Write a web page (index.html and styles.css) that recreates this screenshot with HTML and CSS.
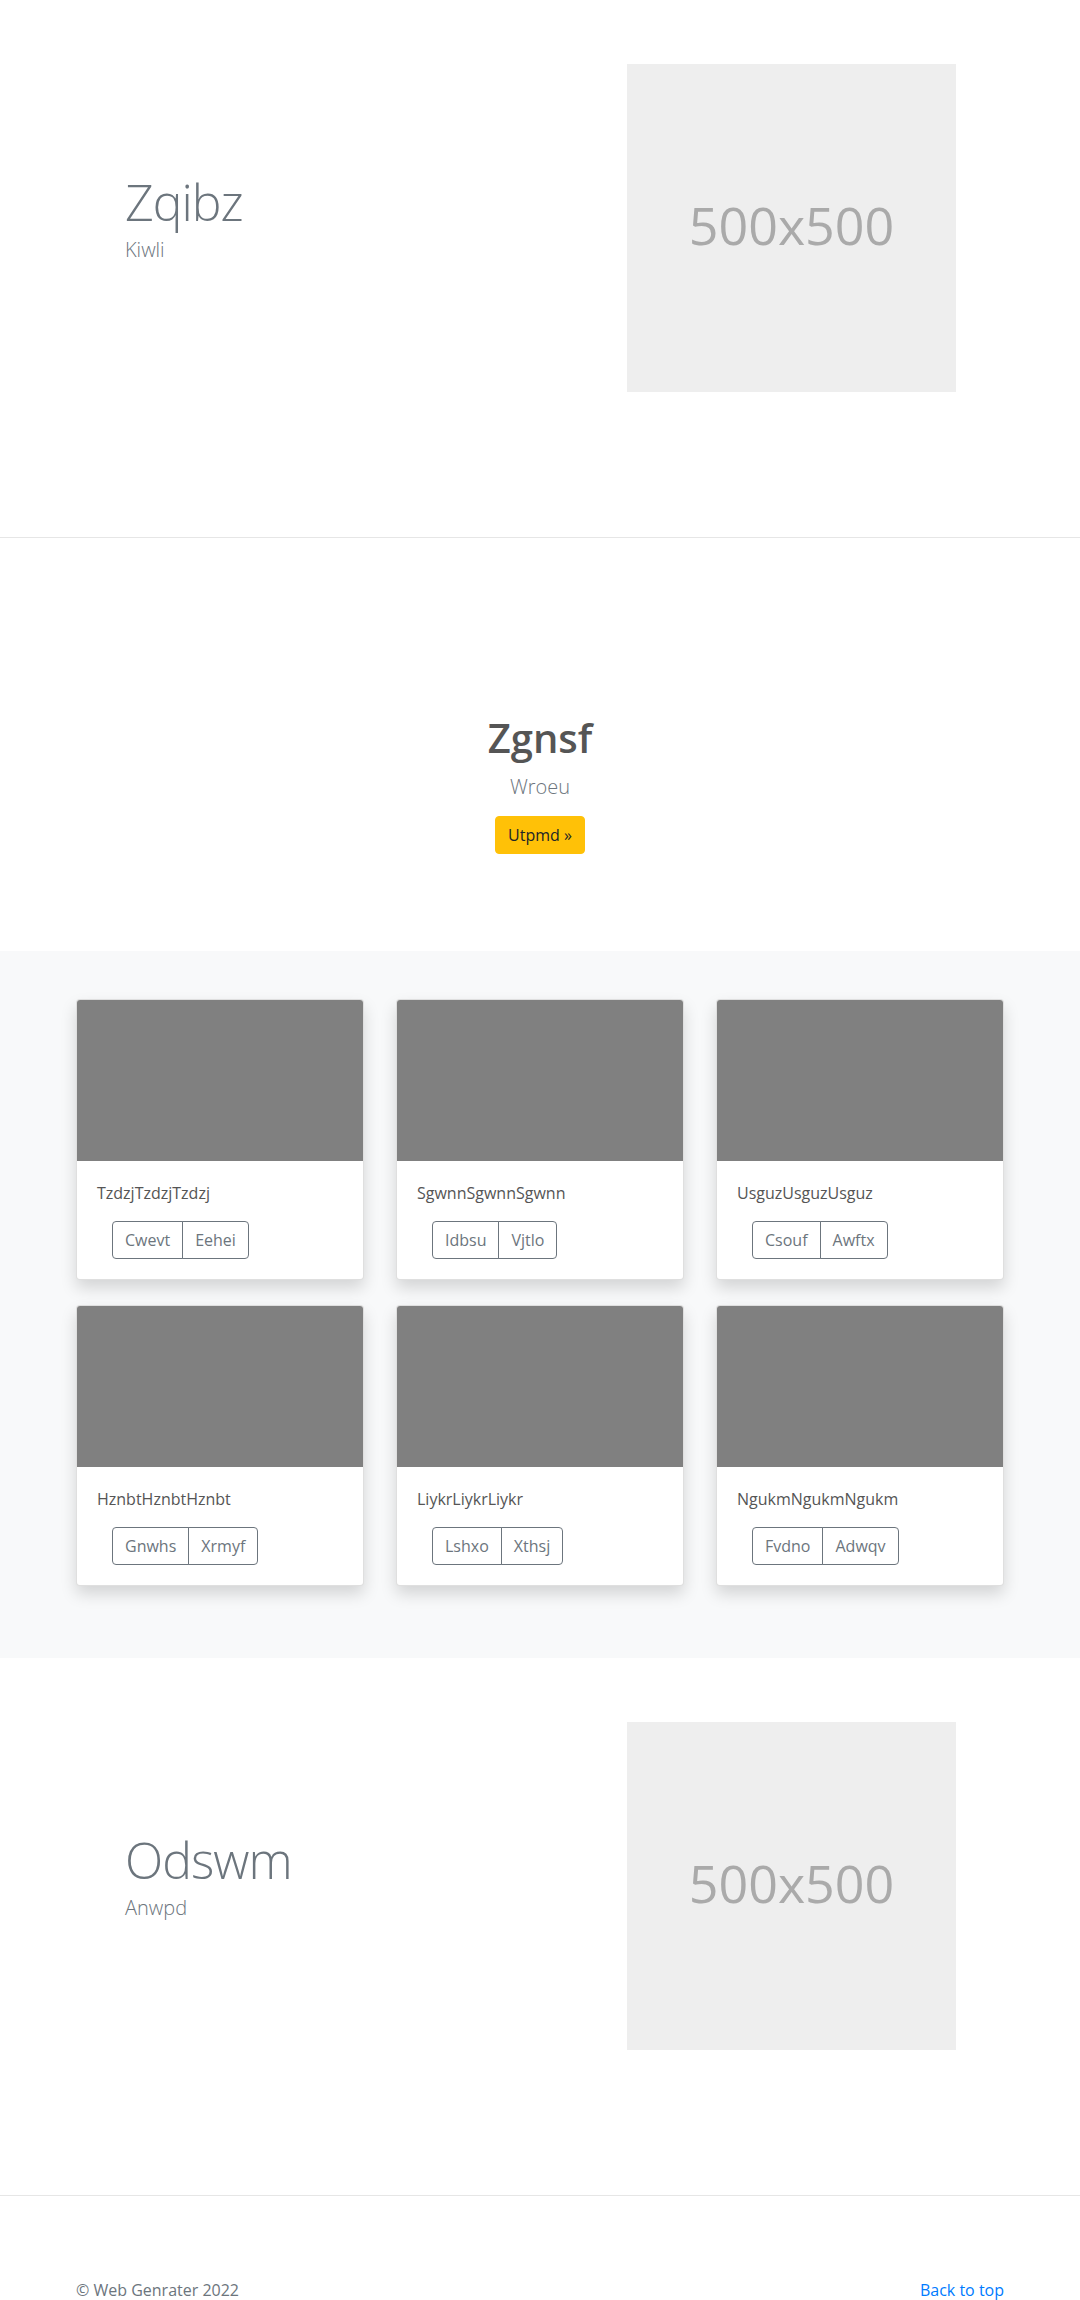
FILE: index.html
```html
<!DOCTYPE html>
<html lang="en">
<head>
<meta charset="utf-8">
<title>Album</title>
<link rel="stylesheet" href="styles.css">
</head>
<body>
<main>
  <section class="feature">
    <div class="wrap feature-row">
      <div class="feature-text">
        <h1 class="display">Zqibz</h1>
        <p class="lead">Kiwli</p>
      </div>
      <div class="feature-media">
        <div class="placeholder">500x500</div>
      </div>
    </div>
  </section>

  <section class="jumbo">
    <h1 class="jumbo-title">Zgnsf</h1>
    <p class="lead">Wroeu</p>
    <div class="actions"><a class="btn btn-warning" href="#">Utpmd »</a></div>
  </section>

  <section class="album">
    <div class="wrap card-grid">
      <div class="card">
        <div class="card-img"></div>
        <div class="card-body">
          <p class="card-text">TzdzjTzdzjTzdzj</p>
          <div class="btn-group"><button class="btn btn-outline">Cwevt</button><button class="btn btn-outline">Eehei</button></div>
        </div>
      </div>
      <div class="card">
        <div class="card-img"></div>
        <div class="card-body">
          <p class="card-text">SgwnnSgwnnSgwnn</p>
          <div class="btn-group"><button class="btn btn-outline">Idbsu</button><button class="btn btn-outline">Vjtlo</button></div>
        </div>
      </div>
      <div class="card">
        <div class="card-img"></div>
        <div class="card-body">
          <p class="card-text">UsguzUsguzUsguz</p>
          <div class="btn-group"><button class="btn btn-outline">Csouf</button><button class="btn btn-outline">Awftx</button></div>
        </div>
      </div>
      <div class="card">
        <div class="card-img"></div>
        <div class="card-body">
          <p class="card-text">HznbtHznbtHznbt</p>
          <div class="btn-group"><button class="btn btn-outline">Gnwhs</button><button class="btn btn-outline">Xrmyf</button></div>
        </div>
      </div>
      <div class="card">
        <div class="card-img"></div>
        <div class="card-body">
          <p class="card-text">LiykrLiykrLiykr</p>
          <div class="btn-group"><button class="btn btn-outline">Lshxo</button><button class="btn btn-outline">Xthsj</button></div>
        </div>
      </div>
      <div class="card">
        <div class="card-img"></div>
        <div class="card-body">
          <p class="card-text">NgukmNgukmNgukm</p>
          <div class="btn-group"><button class="btn btn-outline">Fvdno</button><button class="btn btn-outline">Adwqv</button></div>
        </div>
      </div>
    </div>
  </section>

  <section class="feature">
    <div class="wrap feature-row">
      <div class="feature-text">
        <h1 class="display">Odswm</h1>
        <p class="lead">Anwpd</p>
      </div>
      <div class="feature-media">
        <div class="placeholder">500x500</div>
      </div>
    </div>
  </section>
</main>

<footer class="footer">
  <div class="wrap footer-row">
    <p class="copy">© Web Genrater 2022</p>
    <a class="top-link" href="#">Back to top</a>
  </div>
</footer>
</body>
</html>
```

FILE: styles.css
```css
* { box-sizing: border-box; }

html, body {
  margin: 0;
  padding: 0;
  background: #fff;
}

body {
  font-family: "Open Sans", "Noto Sans", "Liberation Sans", sans-serif;
  font-size: 16px;
  line-height: 1.5;
  color: #212529;
}

.wrap {
  width: 928px;
  margin: 0 auto;
}

/* Feature sections */
.feature {
  padding: 64px 0 145px;
  border-bottom: 1px solid #e6e6e6;
}

.feature-row {
  display: flex;
  align-items: flex-start;
}

.feature-text {
  width: 464px;
  padding-left: 49px;
  margin-top: 108px;
}

.display {
  margin: 0 0 3px;
  font-size: 50px;
  font-weight: 300;
  letter-spacing: -1px;
  line-height: 1.2;
  color: #6c757d;
}

.lead {
  margin: 0;
  font-size: 20px;
  font-weight: 300;
  line-height: 1.5;
  color: #6c757d;
}

.feature-media {
  width: 464px;
  padding-left: 87px;
}

.placeholder {
  width: 329px;
  height: 328px;
  background: #eeeeee;
  color: #aaaaaa;
  font-size: 52px;
  line-height: 1;
  display: flex;
  align-items: center;
  justify-content: center;
  padding-bottom: 6px;
}

/* Jumbotron */
.jumbo {
  padding: 176px 0 97px;
  text-align: center;
}

.jumbo-title {
  margin: 0 0 10px;
  font-size: 40px;
  font-weight: 600;
  line-height: 1.2;
  color: #555555;
}

.jumbo .lead {
  margin-bottom: 14px;
}

.actions {
  display: flex;
  justify-content: center;
}

.btn {
  display: inline-block;
  font-family: inherit;
  font-size: 16px;
  font-weight: 400;
  line-height: 24px;
  padding: 6px 12px;
  border: 1px solid transparent;
  border-radius: 4px;
  text-decoration: none;
  background: transparent;
  cursor: pointer;
}

.btn-warning {
  background: #ffc107;
  border-color: #ffc107;
  color: #212529;
}

/* Album */
.album {
  background: #f8f9fa;
  padding: 48px 0 72px;
}

.card-grid {
  display: grid;
  grid-template-columns: repeat(3, 288px);
  column-gap: 32px;
  row-gap: 25px;
}

.card {
  background: #fff;
  border: 1px solid rgba(0, 0, 0, 0.125);
  border-radius: 4px;
  overflow: hidden;
  box-shadow: 0 8px 16px rgba(0, 0, 0, 0.15);
}

.card-img {
  height: 161px;
  background: #808080;
}

.card-body {
  padding: 20px;
}

.card-text {
  margin: 0 0 16px;
  color: #555555;
}

.btn-group {
  display: inline-flex;
  margin-left: 15px;
}

.btn-outline {
  color: #6c757d;
  border-color: #6c757d;
}

.btn-group .btn-outline:first-child {
  border-top-right-radius: 0;
  border-bottom-right-radius: 0;
}

.btn-group .btn-outline + .btn-outline {
  margin-left: -1px;
  border-top-left-radius: 0;
  border-bottom-left-radius: 0;
}

/* Footer */
.footer {
  padding: 82px 0 48px;
  color: #6c757d;
}

.footer-row {
  display: flex;
  justify-content: space-between;
  align-items: flex-start;
}

.copy {
  margin: 0;
}

.top-link {
  color: #007bff;
  text-decoration: none;
}
```
